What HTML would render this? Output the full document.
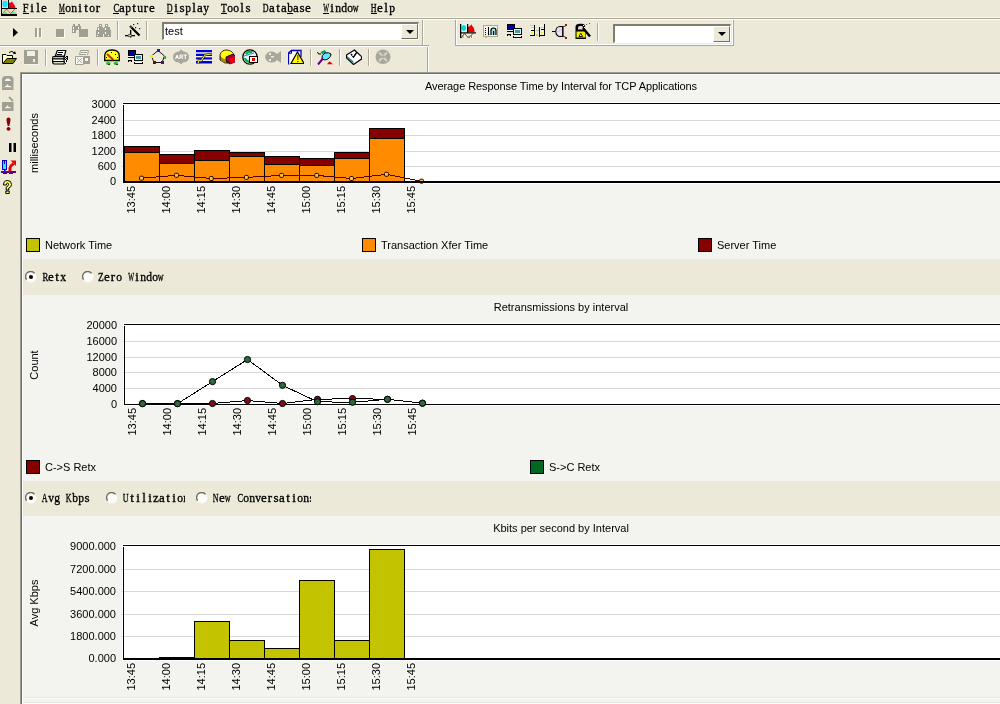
<!DOCTYPE html>
<html><head><meta charset="utf-8"><style>
*{margin:0;padding:0;box-sizing:border-box}
body{width:1000px;height:704px;background:#ece9d8;position:relative;overflow:hidden;font-family:"Liberation Sans",sans-serif}
.a{position:absolute}
.mn{position:absolute;top:2px;font-family:"Liberation Mono",monospace;font-size:12px;letter-spacing:-1.2px;color:#000;line-height:14px;white-space:nowrap;-webkit-text-stroke:0.3px #000}
.mn u{text-underline-offset:1px}
.t{position:absolute;font-size:11px;color:#000;line-height:13px;white-space:nowrap}
.rb{position:absolute;font-family:"Liberation Mono",monospace;font-size:12px;letter-spacing:-1.2px;line-height:14px;white-space:nowrap;color:#000;-webkit-text-stroke:0.3px #000}
svg{position:absolute;left:0;top:0}
.ms{position:absolute;font-family:"Liberation Serif",serif;font-size:13px;line-height:15px;white-space:nowrap;color:#000;-webkit-text-stroke:0.35px #000}
.ms i{font-style:normal;display:inline-block;width:6px;text-align:left;overflow:visible}
.ms b{display:inline-block;font-weight:normal}
</style></head><body><div style="position:absolute;left:0;top:0;width:1000px;height:704px;will-change:transform">
<div class="ms" style="left:23px;top:0px"><i><b style="transform:scaleX(0.802);margin-left:-0.62px;width:7.234375px">F</b></i><i><b style="transform:scaleX(1.0);margin-left:1.19px;width:3.625px">i</b></i><i><b style="transform:scaleX(1.0);margin-left:1.19px;width:3.625px">l</b></i><i><b style="transform:scaleX(1.0);margin-left:0.11px;width:5.78125px">e</b></i></div><div class="a" style="left:23px;top:13px;width:6px;height:1px;background:#000"></div><div class="ms" style="left:59px;top:0px"><i><b style="transform:scaleX(0.502);margin-left:-2.78px;width:11.5625px">M</b></i><i><b style="transform:scaleX(0.892);margin-left:-0.25px;width:6.5px">o</b></i><i><b style="transform:scaleX(0.892);margin-left:-0.25px;width:6.5px">n</b></i><i><b style="transform:scaleX(1.0);margin-left:1.19px;width:3.625px">i</b></i><i><b style="transform:scaleX(1.0);margin-left:1.19px;width:3.625px">t</b></i><i><b style="transform:scaleX(0.892);margin-left:-0.25px;width:6.5px">o</b></i><i><b style="transform:scaleX(1.0);margin-left:0.83px;width:4.34375px">r</b></i></div><div class="a" style="left:59px;top:13px;width:6px;height:1px;background:#000"></div><div class="ms" style="left:113px;top:0px"><i><b style="transform:scaleX(0.669);margin-left:-1.34px;width:8.671875px">C</b></i><i><b style="transform:scaleX(1.0);margin-left:0.11px;width:5.78125px">a</b></i><i><b style="transform:scaleX(0.892);margin-left:-0.25px;width:6.5px">p</b></i><i><b style="transform:scaleX(1.0);margin-left:1.19px;width:3.625px">t</b></i><i><b style="transform:scaleX(0.892);margin-left:-0.25px;width:6.5px">u</b></i><i><b style="transform:scaleX(1.0);margin-left:0.83px;width:4.34375px">r</b></i><i><b style="transform:scaleX(1.0);margin-left:0.11px;width:5.78125px">e</b></i></div><div class="a" style="left:113px;top:13px;width:6px;height:1px;background:#000"></div><div class="ms" style="left:167px;top:0px"><i><b style="transform:scaleX(0.618);margin-left:-1.70px;width:9.390625px">D</b></i><i><b style="transform:scaleX(1.0);margin-left:1.19px;width:3.625px">i</b></i><i><b style="transform:scaleX(1.0);margin-left:0.47px;width:5.0625px">s</b></i><i><b style="transform:scaleX(0.892);margin-left:-0.25px;width:6.5px">p</b></i><i><b style="transform:scaleX(1.0);margin-left:1.19px;width:3.625px">l</b></i><i><b style="transform:scaleX(1.0);margin-left:0.11px;width:5.78125px">a</b></i><i><b style="transform:scaleX(0.892);margin-left:-0.25px;width:6.5px">y</b></i></div><div class="a" style="left:167px;top:13px;width:6px;height:1px;background:#000"></div><div class="ms" style="left:221px;top:0px"><i><b style="transform:scaleX(0.729);margin-left:-0.98px;width:7.953125px">T</b></i><i><b style="transform:scaleX(0.892);margin-left:-0.25px;width:6.5px">o</b></i><i><b style="transform:scaleX(0.892);margin-left:-0.25px;width:6.5px">o</b></i><i><b style="transform:scaleX(1.0);margin-left:1.19px;width:3.625px">l</b></i><i><b style="transform:scaleX(1.0);margin-left:0.47px;width:5.0625px">s</b></i></div><div class="a" style="left:221px;top:13px;width:6px;height:1px;background:#000"></div><div class="ms" style="left:263px;top:0px"><i><b style="transform:scaleX(0.618);margin-left:-1.70px;width:9.390625px">D</b></i><i><b style="transform:scaleX(1.0);margin-left:0.11px;width:5.78125px">a</b></i><i><b style="transform:scaleX(1.0);margin-left:1.19px;width:3.625px">t</b></i><i><b style="transform:scaleX(1.0);margin-left:0.11px;width:5.78125px">a</b></i><i><b style="transform:scaleX(0.892);margin-left:-0.25px;width:6.5px">b</b></i><i><b style="transform:scaleX(1.0);margin-left:0.11px;width:5.78125px">a</b></i><i><b style="transform:scaleX(1.0);margin-left:0.47px;width:5.0625px">s</b></i><i><b style="transform:scaleX(1.0);margin-left:0.11px;width:5.78125px">e</b></i></div><div class="a" style="left:287px;top:13px;width:6px;height:1px;background:#000"></div><div class="ms" style="left:323px;top:0px"><i><b style="transform:scaleX(0.472);margin-left:-3.14px;width:12.28125px">W</b></i><i><b style="transform:scaleX(1.0);margin-left:1.19px;width:3.625px">i</b></i><i><b style="transform:scaleX(0.892);margin-left:-0.25px;width:6.5px">n</b></i><i><b style="transform:scaleX(0.892);margin-left:-0.25px;width:6.5px">d</b></i><i><b style="transform:scaleX(0.892);margin-left:-0.25px;width:6.5px">o</b></i><i><b style="transform:scaleX(0.618);margin-left:-1.70px;width:9.390625px">w</b></i></div><div class="a" style="left:323px;top:13px;width:6px;height:1px;background:#000"></div><div class="ms" style="left:371px;top:0px"><i><b style="transform:scaleX(0.618);margin-left:-1.70px;width:9.390625px">H</b></i><i><b style="transform:scaleX(1.0);margin-left:0.11px;width:5.78125px">e</b></i><i><b style="transform:scaleX(1.0);margin-left:1.19px;width:3.625px">l</b></i><i><b style="transform:scaleX(0.892);margin-left:-0.25px;width:6.5px">p</b></i></div><div class="a" style="left:371px;top:13px;width:6px;height:1px;background:#000"></div><div class="a" style="left:0;top:17px;width:1000px;height:1px;background:#f8f6ee"></div><div class="a" style="left:0;top:18px;width:1000px;height:1px;background:#aca899"></div><div class="a" style="left:0;top:19px;width:1000px;height:1px;background:#fff"></div><div class="a" style="left:0;top:45px;width:429px;height:1px;background:#aca899"></div><div class="a" style="left:0;top:46px;width:428px;height:1px;background:#fff"></div><div class="a" style="left:162px;top:22px;width:257px;height:18px;background:#fff;border-top:2px solid #7f7d70;border-left:2px solid #7f7d70;border-right:1px solid #fff;border-bottom:1px solid #fff"></div><div class="t" style="left:165px;top:25px">test</div><div class="a" style="left:401px;top:24px;width:17px;height:15px;background:#ece9d8;border-right:1px solid #716f64;border-bottom:1px solid #716f64;border-top:1px solid #fff;border-left:1px solid #fff"></div><div class="a" style="left:406px;top:30px;width:0;height:0;border-left:4px solid transparent;border-right:4px solid transparent;border-top:4px solid #000"></div><div class="a" style="left:455px;top:20px;width:279px;height:26px;border-left:1px solid #aca899;border-right:1px solid #aca899;border-bottom:1px solid #aca899"></div><div class="a" style="left:456px;top:20px;width:277px;height:25px;border-left:1px solid #fff;border-right:1px solid #fff;border-bottom:1px solid #fff"></div><div class="a" style="left:613px;top:24px;width:118px;height:19px;background:#fff;border-top:2px solid #7f7d70;border-left:2px solid #7f7d70;border-right:1px solid #fff;border-bottom:1px solid #fff"></div><div class="a" style="left:713px;top:26px;width:17px;height:16px;background:#ece9d8;border-right:1px solid #716f64;border-bottom:1px solid #716f64;border-top:1px solid #fff;border-left:1px solid #fff"></div><div class="a" style="left:718px;top:32px;width:0;height:0;border-left:4px solid transparent;border-right:4px solid transparent;border-top:4px solid #000"></div><div class="a" style="left:20px;top:72px;width:980px;height:632px;background:#f3f4ef;border-left:1px solid #9c9a8c;border-top:1px solid #9c9a8c"></div><div class="a" style="left:21px;top:73px;width:979px;height:631px;border-left:1px solid #716f64;border-top:1px solid #716f64"></div><div class="a" style="left:22px;top:74px;width:978px;height:630px;border-left:1px solid #fff;border-top:1px solid #fff"></div><div class="a" style="left:23px;top:697px;width:977px;height:1px;background:#e9e9e2"></div><div class="a" style="left:23px;top:698px;width:977px;height:1px;background:#fafaf6"></div><div class="a" style="left:23px;top:702px;width:977px;height:1px;background:#e6e6de"></div><div class="a" style="left:23px;top:703px;width:977px;height:1px;background:#fdfdfa"></div><div class="a" style="left:23px;top:259px;width:977px;height:36px;background:#ece9d8"></div><div class="a" style="left:23px;top:481px;width:977px;height:35px;background:#ece9d8"></div><svg width="1000" height="704" viewBox="0 0 1000 704"><rect x="122" y="102" width="878" height="82" fill="#fff"/><rect x="124" y="166" width="877" height="1" fill="#d8d8d8"/><rect x="121" y="166" width="2" height="1" fill="#e0e0e0"/><rect x="124" y="151" width="877" height="1" fill="#d8d8d8"/><rect x="121" y="151" width="2" height="1" fill="#e0e0e0"/><rect x="124" y="135" width="877" height="1" fill="#d8d8d8"/><rect x="121" y="135" width="2" height="1" fill="#e0e0e0"/><rect x="124" y="120" width="877" height="1" fill="#d8d8d8"/><rect x="121" y="120" width="2" height="1" fill="#e0e0e0"/><rect x="124.5" y="146.5" width="35" height="35" fill="#870000" stroke="#000" stroke-width="1"/><rect x="124.5" y="152.5" width="35" height="29" fill="#ff8c00" stroke="#000" stroke-width="1"/><rect x="159.5" y="154.5" width="35" height="27" fill="#870000" stroke="#000" stroke-width="1"/><rect x="159.5" y="163.5" width="35" height="18" fill="#ff8c00" stroke="#000" stroke-width="1"/><rect x="194.5" y="150.5" width="35" height="31" fill="#870000" stroke="#000" stroke-width="1"/><rect x="194.5" y="160.5" width="35" height="21" fill="#ff8c00" stroke="#000" stroke-width="1"/><rect x="229.5" y="152.5" width="35" height="29" fill="#870000" stroke="#000" stroke-width="1"/><rect x="229.5" y="156.5" width="35" height="25" fill="#ff8c00" stroke="#000" stroke-width="1"/><rect x="264.5" y="156.5" width="35" height="25" fill="#870000" stroke="#000" stroke-width="1"/><rect x="264.5" y="164.5" width="35" height="17" fill="#ff8c00" stroke="#000" stroke-width="1"/><rect x="299.5" y="158.5" width="35" height="23" fill="#870000" stroke="#000" stroke-width="1"/><rect x="299.5" y="165.5" width="35" height="16" fill="#ff8c00" stroke="#000" stroke-width="1"/><rect x="334.5" y="152.5" width="35" height="29" fill="#870000" stroke="#000" stroke-width="1"/><rect x="334.5" y="158.5" width="35" height="23" fill="#ff8c00" stroke="#000" stroke-width="1"/><rect x="369.5" y="128.5" width="35" height="53" fill="#870000" stroke="#000" stroke-width="1"/><rect x="369.5" y="138.5" width="35" height="43" fill="#ff8c00" stroke="#000" stroke-width="1"/><polyline points="141.5,178.2 176.5,175.3 211.3,178.5 246.4,177.4 281.6,175.4 316.7,175.4 351.5,178.5 386.5,174.3 421.5,181.2" fill="none" stroke="#500000" stroke-width="1" shape-rendering="crispEdges"/><rect x="139.5" y="176.2" width="4" height="4" rx="1.2" fill="#e8c850" stroke="#300000" stroke-width="1"/><rect x="174.5" y="173.3" width="4" height="4" rx="1.2" fill="#e8c850" stroke="#300000" stroke-width="1"/><rect x="209.3" y="176.5" width="4" height="4" rx="1.2" fill="#e8c850" stroke="#300000" stroke-width="1"/><rect x="244.4" y="175.4" width="4" height="4" rx="1.2" fill="#e8c850" stroke="#300000" stroke-width="1"/><rect x="279.6" y="173.4" width="4" height="4" rx="1.2" fill="#e8c850" stroke="#300000" stroke-width="1"/><rect x="314.7" y="173.4" width="4" height="4" rx="1.2" fill="#e8c850" stroke="#300000" stroke-width="1"/><rect x="349.5" y="176.5" width="4" height="4" rx="1.2" fill="#e8c850" stroke="#300000" stroke-width="1"/><rect x="384.5" y="172.3" width="4" height="4" rx="1.2" fill="#e8c850" stroke="#300000" stroke-width="1"/><rect x="419.5" y="179.2" width="4" height="4" rx="1.2" fill="#e8c850" stroke="#300000" stroke-width="1"/><rect x="123" y="103" width="877" height="1" fill="#000"/><rect x="123" y="105" width="1" height="76" fill="#000"/><rect x="123" y="181" width="877" height="2" fill="#000"/><text x="116" y="185.0" text-anchor="end" font-size="11" font-family="Liberation Sans">0</text><text x="116" y="169.5" text-anchor="end" font-size="11" font-family="Liberation Sans">600</text><text x="116" y="154.5" text-anchor="end" font-size="11" font-family="Liberation Sans">1200</text><text x="116" y="138.5" text-anchor="end" font-size="11" font-family="Liberation Sans">1800</text><text x="116" y="123.5" text-anchor="end" font-size="11" font-family="Liberation Sans">2400</text><text x="116" y="108.0" text-anchor="end" font-size="11" font-family="Liberation Sans">3000</text><text transform="translate(135,186) rotate(-90)" text-anchor="end" font-size="11" font-family="Liberation Sans">13:45</text><text transform="translate(170,186) rotate(-90)" text-anchor="end" font-size="11" font-family="Liberation Sans">14:00</text><text transform="translate(205,186) rotate(-90)" text-anchor="end" font-size="11" font-family="Liberation Sans">14:15</text><text transform="translate(240,186) rotate(-90)" text-anchor="end" font-size="11" font-family="Liberation Sans">14:30</text><text transform="translate(275,186) rotate(-90)" text-anchor="end" font-size="11" font-family="Liberation Sans">14:45</text><text transform="translate(310,186) rotate(-90)" text-anchor="end" font-size="11" font-family="Liberation Sans">15:00</text><text transform="translate(345,186) rotate(-90)" text-anchor="end" font-size="11" font-family="Liberation Sans">15:15</text><text transform="translate(380,186) rotate(-90)" text-anchor="end" font-size="11" font-family="Liberation Sans">15:30</text><text transform="translate(415,186) rotate(-90)" text-anchor="end" font-size="11" font-family="Liberation Sans">15:45</text><text transform="translate(38,143) rotate(-90)" text-anchor="middle" font-size="11" font-family="Liberation Sans">milliseconds</text><text x="561" y="90" text-anchor="middle" font-size="11" letter-spacing="-0.08" font-family="Liberation Sans">Average Response Time by Interval for TCP Applications</text><rect x="26.5" y="238.5" width="13" height="13" fill="#c3c300" stroke="#000"/><text x="45" y="249" font-size="11" font-family="Liberation Sans">Network Time</text><rect x="362.5" y="238.5" width="13" height="13" fill="#ff8c00" stroke="#000"/><text x="381" y="249" font-size="11" font-family="Liberation Sans">Transaction Xfer Time</text><rect x="698.5" y="238.5" width="13" height="13" fill="#870000" stroke="#000"/><text x="717" y="249" font-size="11" font-family="Liberation Sans">Server Time</text><rect x="123" y="323" width="877" height="83" fill="#fff"/><rect x="125" y="388" width="876" height="1" fill="#d8d8d8"/><rect x="122" y="388" width="2" height="1" fill="#e0e0e0"/><rect x="125" y="372" width="876" height="1" fill="#d8d8d8"/><rect x="122" y="372" width="2" height="1" fill="#e0e0e0"/><rect x="125" y="357" width="876" height="1" fill="#d8d8d8"/><rect x="122" y="357" width="2" height="1" fill="#e0e0e0"/><rect x="125" y="341" width="876" height="1" fill="#d8d8d8"/><rect x="122" y="341" width="2" height="1" fill="#e0e0e0"/><polyline points="142.5,403.5 177.5,403.5 212.5,403.5 247.5,400.5 282.5,403.5 317.5,399.3 352.5,398.6 387.5,399.3 422.5,403.2" fill="none" stroke="#000" stroke-width="1" shape-rendering="crispEdges"/><polyline points="142.5,403.7 177.5,403.7 212.5,381.6 247.5,359.5 282.5,385.3 317.5,401.8 352.5,402.3 387.5,399.3 422.5,403.2" fill="none" stroke="#000" stroke-width="1" shape-rendering="crispEdges"/><rect x="124" y="324" width="876" height="1" fill="#000"/><rect x="124" y="326" width="1" height="78" fill="#000"/><rect x="124" y="404" width="876" height="1" fill="#000"/><circle cx="142.5" cy="403.5" r="3.1" fill="#820c14" stroke="#000" stroke-width="1"/><circle cx="177.5" cy="403.5" r="3.1" fill="#820c14" stroke="#000" stroke-width="1"/><circle cx="212.5" cy="403.5" r="3.1" fill="#820c14" stroke="#000" stroke-width="1"/><circle cx="247.5" cy="400.5" r="3.1" fill="#820c14" stroke="#000" stroke-width="1"/><circle cx="282.5" cy="403.5" r="3.1" fill="#820c14" stroke="#000" stroke-width="1"/><circle cx="317.5" cy="399.3" r="3.1" fill="#820c14" stroke="#000" stroke-width="1"/><circle cx="352.5" cy="398.6" r="3.1" fill="#820c14" stroke="#000" stroke-width="1"/><circle cx="387.5" cy="399.3" r="3.1" fill="#820c14" stroke="#000" stroke-width="1"/><circle cx="422.5" cy="403.2" r="3.1" fill="#820c14" stroke="#000" stroke-width="1"/><circle cx="142.5" cy="403.7" r="3.1" fill="#2e6a3c" stroke="#000" stroke-width="1"/><circle cx="177.5" cy="403.7" r="3.1" fill="#2e6a3c" stroke="#000" stroke-width="1"/><circle cx="212.5" cy="381.6" r="3.1" fill="#2e6a3c" stroke="#000" stroke-width="1"/><circle cx="247.5" cy="359.5" r="3.1" fill="#2e6a3c" stroke="#000" stroke-width="1"/><circle cx="282.5" cy="385.3" r="3.1" fill="#2e6a3c" stroke="#000" stroke-width="1"/><circle cx="317.5" cy="401.8" r="3.1" fill="#2e6a3c" stroke="#000" stroke-width="1"/><circle cx="352.5" cy="402.3" r="3.1" fill="#2e6a3c" stroke="#000" stroke-width="1"/><circle cx="387.5" cy="399.3" r="3.1" fill="#2e6a3c" stroke="#000" stroke-width="1"/><circle cx="422.5" cy="403.2" r="3.1" fill="#2e6a3c" stroke="#000" stroke-width="1"/><text x="117" y="407.5" text-anchor="end" font-size="11" font-family="Liberation Sans">0</text><text x="117" y="391.5" text-anchor="end" font-size="11" font-family="Liberation Sans">4000</text><text x="117" y="375.5" text-anchor="end" font-size="11" font-family="Liberation Sans">8000</text><text x="117" y="360.5" text-anchor="end" font-size="11" font-family="Liberation Sans">12000</text><text x="117" y="344.5" text-anchor="end" font-size="11" font-family="Liberation Sans">16000</text><text x="117" y="328.5" text-anchor="end" font-size="11" font-family="Liberation Sans">20000</text><text transform="translate(136,408) rotate(-90)" text-anchor="end" font-size="11" font-family="Liberation Sans">13:45</text><text transform="translate(171,408) rotate(-90)" text-anchor="end" font-size="11" font-family="Liberation Sans">14:00</text><text transform="translate(206,408) rotate(-90)" text-anchor="end" font-size="11" font-family="Liberation Sans">14:15</text><text transform="translate(241,408) rotate(-90)" text-anchor="end" font-size="11" font-family="Liberation Sans">14:30</text><text transform="translate(276,408) rotate(-90)" text-anchor="end" font-size="11" font-family="Liberation Sans">14:45</text><text transform="translate(311,408) rotate(-90)" text-anchor="end" font-size="11" font-family="Liberation Sans">15:00</text><text transform="translate(346,408) rotate(-90)" text-anchor="end" font-size="11" font-family="Liberation Sans">15:15</text><text transform="translate(381,408) rotate(-90)" text-anchor="end" font-size="11" font-family="Liberation Sans">15:30</text><text transform="translate(416,408) rotate(-90)" text-anchor="end" font-size="11" font-family="Liberation Sans">15:45</text><text transform="translate(38,365) rotate(-90)" text-anchor="middle" font-size="11" font-family="Liberation Sans">Count</text><text x="561" y="311" text-anchor="middle" font-size="11" font-family="Liberation Sans">Retransmissions by interval</text><rect x="26.5" y="460.5" width="13" height="13" fill="#870000" stroke="#000"/><text x="45" y="471" font-size="11" font-family="Liberation Sans">C-&gt;S Retx</text><rect x="530.5" y="460.5" width="13" height="13" fill="#006820" stroke="#000"/><text x="549" y="471" font-size="11" font-family="Liberation Sans">S-&gt;C Retx</text><rect x="122" y="544" width="878" height="117" fill="#fff"/><rect x="124" y="636" width="877" height="1" fill="#d8d8d8"/><rect x="121" y="636" width="2" height="1" fill="#e0e0e0"/><rect x="124" y="614" width="877" height="1" fill="#d8d8d8"/><rect x="121" y="614" width="2" height="1" fill="#e0e0e0"/><rect x="124" y="591" width="877" height="1" fill="#d8d8d8"/><rect x="121" y="591" width="2" height="1" fill="#e0e0e0"/><rect x="124" y="569" width="877" height="1" fill="#d8d8d8"/><rect x="121" y="569" width="2" height="1" fill="#e0e0e0"/><rect x="159.5" y="657.5" width="35" height="1" fill="#c3c300" stroke="#000"/><rect x="194.5" y="621.5" width="35" height="37" fill="#c3c300" stroke="#000"/><rect x="229.5" y="640.5" width="35" height="18" fill="#c3c300" stroke="#000"/><rect x="264.5" y="648.5" width="35" height="10" fill="#c3c300" stroke="#000"/><rect x="299.5" y="580.5" width="35" height="78" fill="#c3c300" stroke="#000"/><rect x="334.5" y="640.5" width="35" height="18" fill="#c3c300" stroke="#000"/><rect x="369.5" y="549.5" width="35" height="109" fill="#c3c300" stroke="#000"/><rect x="123" y="545" width="877" height="1" fill="#000"/><rect x="123" y="547" width="1" height="111" fill="#000"/><rect x="123" y="658" width="877" height="2" fill="#000"/><text x="116" y="662.0" text-anchor="end" font-size="11" font-family="Liberation Sans">0.000</text><text x="116" y="639.5" text-anchor="end" font-size="11" font-family="Liberation Sans">1800.000</text><text x="116" y="617.5" text-anchor="end" font-size="11" font-family="Liberation Sans">3600.000</text><text x="116" y="594.5" text-anchor="end" font-size="11" font-family="Liberation Sans">5400.000</text><text x="116" y="572.5" text-anchor="end" font-size="11" font-family="Liberation Sans">7200.000</text><text x="116" y="549.5" text-anchor="end" font-size="11" font-family="Liberation Sans">9000.000</text><text transform="translate(135,663) rotate(-90)" text-anchor="end" font-size="11" font-family="Liberation Sans">13:45</text><text transform="translate(170,663) rotate(-90)" text-anchor="end" font-size="11" font-family="Liberation Sans">14:00</text><text transform="translate(205,663) rotate(-90)" text-anchor="end" font-size="11" font-family="Liberation Sans">14:15</text><text transform="translate(240,663) rotate(-90)" text-anchor="end" font-size="11" font-family="Liberation Sans">14:30</text><text transform="translate(275,663) rotate(-90)" text-anchor="end" font-size="11" font-family="Liberation Sans">14:45</text><text transform="translate(310,663) rotate(-90)" text-anchor="end" font-size="11" font-family="Liberation Sans">15:00</text><text transform="translate(345,663) rotate(-90)" text-anchor="end" font-size="11" font-family="Liberation Sans">15:15</text><text transform="translate(380,663) rotate(-90)" text-anchor="end" font-size="11" font-family="Liberation Sans">15:30</text><text transform="translate(415,663) rotate(-90)" text-anchor="end" font-size="11" font-family="Liberation Sans">15:45</text><text transform="translate(38,603) rotate(-90)" text-anchor="middle" font-size="11" font-family="Liberation Sans">Avg Kbps</text><text x="561" y="532" text-anchor="middle" font-size="11" font-family="Liberation Sans">Kbits per second by Interval</text></svg><svg style="left:25px;top:271px" width="12" height="12"><circle cx="6" cy="6" r="5.5" fill="#fbfbf8"/><path d="M1.6 8.6 A5 5 0 0 1 9.6 2.4" fill="none" stroke="#6c6c64" stroke-width="1.4"/><circle cx="6" cy="6" r="2" fill="#000"/></svg><div class="ms" style="left:42px;top:269px"><i><b style="transform:scaleX(0.669);margin-left:-1.34px;width:8.671875px">R</b></i><i><b style="transform:scaleX(1.0);margin-left:0.11px;width:5.78125px">e</b></i><i><b style="transform:scaleX(1.0);margin-left:1.19px;width:3.625px">t</b></i><i><b style="transform:scaleX(0.892);margin-left:-0.25px;width:6.5px">x</b></i></div><svg style="left:82px;top:271px" width="12" height="12"><circle cx="6" cy="6" r="5.5" fill="#fbfbf8"/><path d="M1.6 8.6 A5 5 0 0 1 9.6 2.4" fill="none" stroke="#6c6c64" stroke-width="1.4"/></svg><div class="ms" style="left:98px;top:269px"><i><b style="transform:scaleX(0.729);margin-left:-0.98px;width:7.953125px">Z</b></i><i><b style="transform:scaleX(1.0);margin-left:0.11px;width:5.78125px">e</b></i><i><b style="transform:scaleX(1.0);margin-left:0.83px;width:4.34375px">r</b></i><i><b style="transform:scaleX(0.892);margin-left:-0.25px;width:6.5px">o</b></i><i><b style="transform:scaleX(0.892);margin-left:-0.25px;width:6.5px">&nbsp;</b></i><i><b style="transform:scaleX(0.472);margin-left:-3.14px;width:12.28125px">W</b></i><i><b style="transform:scaleX(1.0);margin-left:1.19px;width:3.625px">i</b></i><i><b style="transform:scaleX(0.892);margin-left:-0.25px;width:6.5px">n</b></i><i><b style="transform:scaleX(0.892);margin-left:-0.25px;width:6.5px">d</b></i><i><b style="transform:scaleX(0.892);margin-left:-0.25px;width:6.5px">o</b></i><i><b style="transform:scaleX(0.618);margin-left:-1.70px;width:9.390625px">w</b></i></div><svg style="left:25px;top:492px" width="12" height="12"><circle cx="6" cy="6" r="5.5" fill="#fbfbf8"/><path d="M1.6 8.6 A5 5 0 0 1 9.6 2.4" fill="none" stroke="#6c6c64" stroke-width="1.4"/><circle cx="6" cy="6" r="2" fill="#000"/></svg><div class="ms" style="left:42px;top:490px"><i><b style="transform:scaleX(0.618);margin-left:-1.70px;width:9.390625px">A</b></i><i><b style="transform:scaleX(0.892);margin-left:-0.25px;width:6.5px">v</b></i><i><b style="transform:scaleX(0.892);margin-left:-0.25px;width:6.5px">g</b></i><i><b style="transform:scaleX(0.892);margin-left:-0.25px;width:6.5px">&nbsp;</b></i><i><b style="transform:scaleX(0.618);margin-left:-1.70px;width:9.390625px">K</b></i><i><b style="transform:scaleX(0.892);margin-left:-0.25px;width:6.5px">b</b></i><i><b style="transform:scaleX(0.892);margin-left:-0.25px;width:6.5px">p</b></i><i><b style="transform:scaleX(1.0);margin-left:0.47px;width:5.0625px">s</b></i></div><svg style="left:106px;top:492px" width="12" height="12"><circle cx="6" cy="6" r="5.5" fill="#fbfbf8"/><path d="M1.6 8.6 A5 5 0 0 1 9.6 2.4" fill="none" stroke="#6c6c64" stroke-width="1.4"/></svg><div class="ms" style="left:123px;top:490px;width:62px;overflow:hidden"><i><b style="transform:scaleX(0.618);margin-left:-1.70px;width:9.390625px">U</b></i><i><b style="transform:scaleX(1.0);margin-left:1.19px;width:3.625px">t</b></i><i><b style="transform:scaleX(1.0);margin-left:1.19px;width:3.625px">i</b></i><i><b style="transform:scaleX(1.0);margin-left:1.19px;width:3.625px">l</b></i><i><b style="transform:scaleX(1.0);margin-left:1.19px;width:3.625px">i</b></i><i><b style="transform:scaleX(1.0);margin-left:0.11px;width:5.78125px">z</b></i><i><b style="transform:scaleX(1.0);margin-left:0.11px;width:5.78125px">a</b></i><i><b style="transform:scaleX(1.0);margin-left:1.19px;width:3.625px">t</b></i><i><b style="transform:scaleX(1.0);margin-left:1.19px;width:3.625px">i</b></i><i><b style="transform:scaleX(0.892);margin-left:-0.25px;width:6.5px">o</b></i><i><b style="transform:scaleX(0.892);margin-left:-0.25px;width:6.5px">n</b></i></div><svg style="left:196px;top:492px" width="12" height="12"><circle cx="6" cy="6" r="5.5" fill="#fbfbf8"/><path d="M1.6 8.6 A5 5 0 0 1 9.6 2.4" fill="none" stroke="#6c6c64" stroke-width="1.4"/></svg><div class="ms" style="left:213px;top:490px;width:98px;overflow:hidden"><i><b style="transform:scaleX(0.618);margin-left:-1.70px;width:9.390625px">N</b></i><i><b style="transform:scaleX(1.0);margin-left:0.11px;width:5.78125px">e</b></i><i><b style="transform:scaleX(0.618);margin-left:-1.70px;width:9.390625px">w</b></i><i><b style="transform:scaleX(0.892);margin-left:-0.25px;width:6.5px">&nbsp;</b></i><i><b style="transform:scaleX(0.669);margin-left:-1.34px;width:8.671875px">C</b></i><i><b style="transform:scaleX(0.892);margin-left:-0.25px;width:6.5px">o</b></i><i><b style="transform:scaleX(0.892);margin-left:-0.25px;width:6.5px">n</b></i><i><b style="transform:scaleX(0.892);margin-left:-0.25px;width:6.5px">v</b></i><i><b style="transform:scaleX(1.0);margin-left:0.11px;width:5.78125px">e</b></i><i><b style="transform:scaleX(1.0);margin-left:0.83px;width:4.34375px">r</b></i><i><b style="transform:scaleX(1.0);margin-left:0.47px;width:5.0625px">s</b></i><i><b style="transform:scaleX(1.0);margin-left:0.11px;width:5.78125px">a</b></i><i><b style="transform:scaleX(1.0);margin-left:1.19px;width:3.625px">t</b></i><i><b style="transform:scaleX(1.0);margin-left:1.19px;width:3.625px">i</b></i><i><b style="transform:scaleX(0.892);margin-left:-0.25px;width:6.5px">o</b></i><i><b style="transform:scaleX(0.892);margin-left:-0.25px;width:6.5px">n</b></i><i><b style="transform:scaleX(1.0);margin-left:0.47px;width:5.0625px">s</b></i></div><svg style="left:0;top:0" width="18" height="17" viewBox="0 0 18 17"><rect x="2" y="0" width="15" height="15" fill="#f0d8d8"/><rect x="9" y="0" width="8" height="8" fill="#d8ecd8"/><ellipse cx="5" cy="4" rx="2.6" ry="3.3" fill="#10e8f8"/><path d="M9 8 V3 Q11 2.5 12 1.5 L13 3 Q15 5 15.5 8 Z" fill="#f00010"/><rect x="2" y="9" width="15" height="5" fill="#f0d8c0"/><rect x="3" y="12" width="4" height="2" fill="#80e080"/><rect x="11.5" y="12" width="4" height="2" fill="#80e080"/><path d="M2.5 13.5 L6.5 9 L10.5 13.5 L15 9" fill="none" stroke="#803020" stroke-width="1" stroke-dasharray="1 0.6"/><rect x="1" y="0" width="1" height="16" fill="#000"/><rect x="8" y="0" width="1" height="9" fill="#000"/><rect x="1" y="8" width="16" height="1" fill="#000"/><rect x="1" y="14" width="16" height="2" fill="#000"/></svg><svg style="left:8px;top:22px" width="16" height="16" viewBox="0 0 16 16"><path d="M5 6 L10 10.5 L5 15 Z" fill="#000" stroke="none" stroke-width="1"/></svg><svg style="left:30px;top:22px" width="16" height="16" viewBox="0 0 16 16"><rect x="5" y="6" width="2" height="9" fill="#a09f94"/><rect x="9" y="6" width="2" height="9" fill="#a09f94"/><rect x="7" y="7" width="1" height="9" fill="#ffffff"/><rect x="11" y="7" width="1" height="9" fill="#ffffff"/></svg><svg style="left:52px;top:22px" width="16" height="16" viewBox="0 0 16 16"><rect x="4" y="7" width="8" height="8" fill="#a09f94"/><rect x="5" y="15" width="8" height="1" fill="#ffffff"/><rect x="12" y="8" width="1" height="8" fill="#ffffff"/></svg><svg style="left:72px;top:23px" width="16" height="16" viewBox="0 0 16 16"><rect x="1" y="1" width="2" height="2" fill="#a09f94"/><rect x="6" y="1" width="2" height="2" fill="#a09f94"/><rect x="0" y="3" width="4" height="7" fill="#a09f94"/><rect x="4" y="3" width="5" height="4" fill="#a09f94"/><rect x="1" y="4" width="1" height="2" fill="#ffffff"/><rect x="6" y="4" width="1" height="2" fill="#ffffff"/><rect x="1" y="7" width="1" height="2" fill="#ffffff"/><rect x="7" y="6" width="9" height="8" fill="#a09f94"/><rect x="8" y="14" width="8" height="1" fill="#f8f8f0"/><rect x="16" y="7" width="0" height="0" fill="#ffffff"/></svg><svg style="left:96px;top:23px" width="16" height="16" viewBox="0 0 16 16"><rect x="3" y="1" width="3" height="3" fill="#a09f94"/><rect x="9" y="1" width="3" height="3" fill="#a09f94"/><rect x="1" y="4" width="6" height="3" fill="#a09f94"/><rect x="8" y="4" width="6" height="3" fill="#a09f94"/><rect x="0" y="7" width="7" height="7" fill="#a09f94"/><rect x="8" y="7" width="7" height="7" fill="#a09f94"/><rect x="6" y="5" width="3" height="6" fill="#a09f94"/><rect x="4" y="2" width="1" height="1" fill="#ffffff"/><rect x="10" y="2" width="1" height="1" fill="#ffffff"/><rect x="2" y="5" width="1" height="2" fill="#ffffff"/><rect x="9" y="5" width="1" height="2" fill="#ffffff"/><rect x="2" y="9" width="1" height="2" fill="#ffffff"/><rect x="9" y="9" width="1" height="2" fill="#ffffff"/><rect x="1" y="12" width="1" height="1" fill="#ffffff"/><rect x="12" y="12" width="1" height="1" fill="#ffffff"/></svg><div class="a" style="left:117px;top:21px;width:1px;height:19px;background:#aca899"></div><div class="a" style="left:118px;top:21px;width:1px;height:19px;background:#fff"></div><svg style="left:125px;top:22px" width="16" height="16" viewBox="0 0 16 16"><path d="M5 4 L14.5 13.5" fill="none" stroke="#000" stroke-width="2.3"/><rect x="4" y="3" width="1" height="1" fill="#ffffff"/><rect x="5.5" y="4.5" width="1" height="1" fill="#ffffff"/><rect x="8" y="2" width="1.2" height="1.2" fill="#222"/><rect x="12" y="1" width="1.2" height="1.2" fill="#222"/><rect x="10" y="5" width="1.2" height="1.2" fill="#222"/><rect x="14" y="6" width="1.2" height="1.2" fill="#222"/><rect x="0" y="13" width="10" height="1.3" fill="#000"/><rect x="5" y="8" width="1.3" height="7.5" fill="#000"/><path d="M3 13.5 a1.8 1.2 0 1 0 3.6 0 a1.8 1.2 0 1 0 -3.6 0Z" fill="#d8d8a0" stroke="#000" stroke-width="0.6"/></svg><div class="a" style="left:146px;top:21px;width:1px;height:19px;background:#aca899"></div><div class="a" style="left:147px;top:21px;width:1px;height:19px;background:#fff"></div><svg style="left:460px;top:23px" width="16" height="16" viewBox="0 0 16 16"><rect x="1" y="1" width="6" height="8.5" fill="#d0f8f8"/><path d="M3.8 2 a2.2 3 0 1 0 0.01 0Z" fill="#00d8d8" stroke="none" stroke-width="1"/><path d="M8 9.3 V4 L10 3 L11.5 1.2 L12.2 3 Q14.5 4.5 14.5 9.3Z" fill="#f00000" stroke="none" stroke-width="1"/><rect x="1" y="10.5" width="12" height="4.5" fill="#f8f0e8"/><rect x="2.5" y="12.5" width="1" height="2.5" fill="#40c040"/><rect x="8.5" y="12.5" width="1" height="2.5" fill="#40c040"/><rect x="11" y="12.5" width="1" height="2.5" fill="#40c040"/><path d="M1 15 L4.5 10.5 L8.5 15 L13 10.5" fill="none" stroke="#604020" stroke-width="1"/><rect x="0" y="1" width="1.3" height="14" fill="#000"/><rect x="7" y="1" width="1.3" height="9" fill="#000"/><rect x="0" y="9.3" width="16" height="1.2" fill="#000"/></svg><svg style="left:483px;top:23px" width="16" height="16" viewBox="0 0 16 16"><rect x="0" y="2" width="15" height="12" fill="#a8a89c"/><rect x="1" y="3" width="13" height="10" fill="#f4f4ec"/><rect x="2" y="5" width="1" height="1" fill="#000"/><rect x="2" y="7" width="1" height="1" fill="#000"/><rect x="2" y="9" width="1" height="1" fill="#000"/><rect x="2" y="11" width="1" height="1" fill="#000"/><rect x="5" y="4" width="1" height="9" fill="#000"/><path d="M8 12 V7.5 Q8 5 10.5 5 Q13 5 13 7.5 V12" fill="#a0e0e0" stroke="#000" stroke-width="1.2"/><rect x="10" y="8" width="1.2" height="4" fill="#000"/><path d="M1 13 L3 15 L7 11" fill="none" stroke="#c0c060" stroke-width="1"/></svg><svg style="left:506px;top:23px" width="16" height="16" viewBox="0 0 16 16"><rect x="1" y="1" width="8" height="6" fill="#000"/><rect x="2" y="2" width="6" height="4" fill="#0000a0"/><rect x="1" y="7" width="8" height="1" fill="#fff"/><rect x="1" y="8" width="8" height="1" fill="#000"/><rect x="7" y="5" width="9" height="7" fill="#000"/><rect x="8" y="6" width="7" height="5" fill="#e8f0f0"/><rect x="9" y="7" width="5" height="3" fill="#40a0a0"/><rect x="7" y="13" width="9" height="2" fill="#000"/><rect x="8" y="13" width="7" height="1" fill="#fff"/><rect x="1" y="11" width="4" height="2" fill="#000"/><rect x="2" y="12" width="2" height="1" fill="#e0d040"/></svg><svg style="left:529px;top:23px" width="16" height="16" viewBox="0 0 16 16"><rect x="1" y="2" width="5" height="11" fill="#f0f0e4"/><rect x="1" y="2" width="5" height="1" fill="#c8c8b8"/><rect x="5" y="2" width="1" height="11" fill="#000"/><rect x="1" y="12" width="5" height="1" fill="#000"/><rect x="6" y="4" width="5" height="10" fill="#e8e8d8"/><rect x="10" y="4" width="1" height="10" fill="#000"/><rect x="11" y="1" width="5" height="12" fill="#f0f0e4"/><rect x="15" y="1" width="1" height="12" fill="#000"/><rect x="11" y="12" width="5" height="1" fill="#000"/><rect x="2" y="4" width="3" height="1" fill="#c8c8b8"/><rect x="12" y="4" width="3" height="1" fill="#c8c8b8"/><rect x="2" y="9" width="2" height="2" fill="#f0f040"/><rect x="7" y="11" width="2" height="2" fill="#d0d040"/><rect x="12" y="9" width="2" height="2" fill="#f0f040"/><rect x="2" y="7" width="3" height="1" fill="#000"/><rect x="12" y="6" width="3" height="1" fill="#000"/><rect x="7" y="7" width="3" height="1" fill="#c0c0b0"/></svg><svg style="left:552px;top:23px" width="16" height="16" viewBox="0 0 16 16"><rect x="0" y="8" width="4" height="1" fill="#000"/><path d="M10.5 3.5 H8 A4.2 5 0 0 0 8 13.5 H10.5 Z" fill="#e4e4f4" stroke="#000" stroke-width="1.1"/><rect x="10.3" y="3" width="1.3" height="11" fill="#301010"/><path d="M11 4 L14 2.5 M11 13 L14 14.5" fill="none" stroke="#602020" stroke-width="1"/><rect x="13" y="1" width="2" height="2" fill="#802020"/><rect x="13" y="14" width="2" height="2" fill="#802020"/><path d="M8 4 L8 8 L4 9" fill="none" stroke="#c0c0d8" stroke-width="0.7"/></svg><svg style="left:575px;top:23px" width="16" height="16" viewBox="0 0 16 16"><path d="M0.5 8 V4 Q0.5 0.8 5 0.8 H7 Q10 0.8 10 4 V8Z" fill="#000" stroke="none" stroke-width="1"/><path d="M3 6.5 V4.5 Q3 3 5 3 H6.5 Q8 3 8 4.5 V6.5Z" fill="#f0d0e0" stroke="none" stroke-width="1"/><rect x="0.5" y="8" width="10.5" height="8" fill="#000"/><rect x="1.5" y="8.5" width="9" height="6" fill="#f0f000"/><path d="M4 13.5 L5.8 10.3 L7.6 13.5Z" fill="#fff" stroke="#000" stroke-width="0.9"/><path d="M8 5 L15 13.5" fill="none" stroke="#000" stroke-width="2.4"/><rect x="8" y="2" width="1" height="1" fill="#fff"/><rect x="9" y="4" width="1" height="1" fill="#fff"/><rect x="11" y="1" width="1" height="1" fill="#555"/><rect x="14" y="0" width="1" height="1" fill="#555"/></svg><div class="a" style="left:597px;top:23px;width:1px;height:18px;background:#aca899"></div><div class="a" style="left:598px;top:23px;width:1px;height:18px;background:#fff"></div><svg style="left:1px;top:49px" width="16" height="16" viewBox="0 0 16 16"><path d="M1.5 14.5 V5.5 H5 L6 6.5 H11.5 V9" fill="#ffffc0" stroke="#000" stroke-width="1"/><path d="M2 14.5 L6 9.5 H15.5 L12 14.5 Z" fill="#808000" stroke="#000" stroke-width="1"/><path d="M8 3.5 Q11 1 13.5 4" fill="none" stroke="#000" stroke-width="1"/><path d="M12 5 L15 5 L14 2 Z" fill="#000" stroke="none" stroke-width="1"/></svg><svg style="left:24px;top:49px" width="16" height="16" viewBox="0 0 16 16"><rect x="0" y="1" width="14" height="14" fill="#a09f94"/><rect x="3" y="2" width="8" height="5" fill="#f0efe8"/><rect x="9" y="10" width="2" height="3" fill="#f0efe8"/><rect x="1" y="15" width="14" height="1" fill="#f8f8f0"/></svg><div class="a" style="left:45px;top:49px;width:1px;height:17px;background:#aca899"></div><div class="a" style="left:46px;top:49px;width:1px;height:17px;background:#fff"></div><svg style="left:52px;top:49px" width="16" height="16" viewBox="0 0 16 16"><path d="M5.3 1.5 H13.8 L12.5 7 H3.3 Z" fill="#fff" stroke="#000" stroke-width="1.2"/><rect x="6" y="3" width="5" height="1" fill="#000"/><rect x="5" y="5" width="5" height="1" fill="#000"/><path d="M1.5 7.6 H12 V14.8 H2 Q0.6 14.8 0.6 13 V9.4 Q0.6 7.6 1.5 7.6Z" fill="#fff" stroke="#000" stroke-width="1.2"/><rect x="1" y="9.2" width="11.5" height="1.3" fill="#000"/><rect x="1" y="12" width="11.5" height="1.3" fill="#000"/><rect x="2" y="13.3" width="9.5" height="1" fill="#f0f0c8"/><rect x="12" y="7" width="1" height="1" fill="#000"/><rect x="14" y="7" width="1" height="1" fill="#000"/><rect x="13" y="8" width="1" height="1" fill="#000"/><rect x="12" y="9" width="1" height="1" fill="#000"/><rect x="14" y="9" width="1" height="1" fill="#000"/><rect x="13" y="10" width="1" height="1" fill="#000"/><rect x="12" y="13" width="1" height="1" fill="#000"/><rect x="13" y="14" width="1" height="1" fill="#000"/><rect x="15" y="7" width="1" height="4" fill="#000"/><rect x="14" y="11" width="1" height="2" fill="#000"/></svg><svg style="left:75px;top:49px" width="16" height="16" viewBox="0 0 16 16"><path d="M4.5 6 L5.5 1.5 H13.5 L12.5 6" fill="#f4f4ee" stroke="#a09f94" stroke-width="1"/><rect x="6" y="3" width="6" height="1" fill="#a09f94"/><rect x="5" y="5" width="6" height="1" fill="#a09f94"/><path d="M0.5 7.5 H8.5 V15.5 H0.5 Z" fill="#f4f4ee" stroke="#a09f94" stroke-width="1"/><path d="M2 9 L7 14 M7 9 L2 14" fill="none" stroke="#a09f94" stroke-width="0.8"/><rect x="9" y="7" width="6" height="8" fill="#a09f94"/><rect x="10" y="9" width="3" height="3" fill="#f4f4ee"/></svg><div class="a" style="left:97px;top:49px;width:1px;height:17px;background:#aca899"></div><div class="a" style="left:98px;top:49px;width:1px;height:17px;background:#fff"></div><svg style="left:104px;top:49px" width="16" height="16" viewBox="0 0 16 16"><path d="M0.7 11.5 V7 Q0.7 1 8 1 Q15.3 1 15.3 7 V11.5 Z" fill="#ffff20" stroke="#000" stroke-width="1.3"/><path d="M3 5 L9.5 11" fill="none" stroke="#b83000" stroke-width="1.8"/><rect x="7" y="3" width="1" height="1" fill="#000"/><rect x="11" y="5" width="1" height="1" fill="#000"/><rect x="2" y="8" width="1" height="1" fill="#000"/><rect x="13" y="8" width="1" height="1" fill="#000"/><path d="M2 14.5 a2.3 1.4 0 1 0 4.6 0 a2.3 1.4 0 1 0 -4.6 0Z" fill="#20c020" stroke="none" stroke-width="1"/><path d="M9.5 14.5 a2.3 1.4 0 1 0 4.6 0 a2.3 1.4 0 1 0 -4.6 0Z" fill="#20c020" stroke="none" stroke-width="1"/><rect x="4" y="15" width="2" height="1" fill="#005000"/><rect x="12" y="15" width="2" height="1" fill="#005000"/></svg><svg style="left:127px;top:49px" width="16" height="16" viewBox="0 0 16 16"><rect x="1" y="1" width="8" height="6" fill="#000"/><rect x="2" y="2" width="6" height="4" fill="#0000a0"/><rect x="1" y="7" width="8" height="1" fill="#fff"/><rect x="1" y="8" width="8" height="1" fill="#000"/><rect x="7" y="5" width="9" height="7" fill="#000"/><rect x="8" y="6" width="7" height="5" fill="#e8f0f0"/><rect x="9" y="7" width="5" height="3" fill="#40a0a0"/><rect x="7" y="13" width="9" height="2" fill="#000"/><rect x="8" y="13" width="7" height="1" fill="#fff"/><rect x="1" y="11" width="4" height="2" fill="#000"/><rect x="2" y="12" width="2" height="1" fill="#e0d040"/></svg><svg style="left:150px;top:49px" width="16" height="16" viewBox="0 0 16 16"><path d="M8 1.5 L14.5 7 L12 13.5 L4 13.5 L1.5 7 Z" fill="none" stroke="#000" stroke-width="0.9"/><rect x="7" y="0" width="3" height="3" fill="#2020a0"/><rect x="14" y="7" width="2" height="3" fill="#40a040"/><rect x="11" y="12" width="3" height="3" fill="#700070"/><rect x="3" y="12" width="3" height="3" fill="#800000"/><rect x="0" y="6" width="3" height="3" fill="#e8e840"/></svg><svg style="left:173px;top:49px" width="16" height="16" viewBox="0 0 16 16"><path d="M8 0.5 L10.5 2.5 Q16 3 16 8 Q16 13 10 13.5 L8 15.5 L6 13.5 Q0 13 0 8 Q0 3 6 2.5 Z" fill="#a8a79c" stroke="none" stroke-width="1"/><path d="M2.5 10 L4 6 L5.5 10 M3 8.5 H5 M7 10 V6 H9 Q9.8 6 9.8 7 Q9.8 8 9 8 H7 M8.5 8 L10 10 M10.5 6 H14 M12.3 6 V10" fill="none" stroke="#fff" stroke-width="1"/></svg><svg style="left:196px;top:49px" width="16" height="16" viewBox="0 0 16 16"><rect x="0" y="1" width="16" height="2.5" fill="#0000d0"/><rect x="0" y="4.5" width="16" height="2.5" fill="#0000d0"/><rect x="0" y="8.2" width="16" height="2.5" fill="#0000d0"/><rect x="0" y="12" width="16" height="2.5" fill="#0000d0"/><rect x="0" y="3.5" width="16" height="1" fill="#f0f0f0"/><rect x="0" y="7" width="16" height="1.2" fill="#f0f0f0"/><rect x="0" y="10.7" width="16" height="1.3" fill="#f0f0f0"/><path d="M2 14.5 L3 11 L5 12 L9 6 L16 5" fill="none" stroke="#000" stroke-width="2.2"/><path d="M2 14.5 L3 11 L5 12 L9 6 L16 5" fill="none" stroke="#e8e840" stroke-width="1.2"/></svg><svg style="left:219px;top:49px" width="16" height="16" viewBox="0 0 16 16"><path d="M8 1 Q2 1 1 6 L1 11 L6 14 L10 14 L11 8 L15 6 Q14 2 8 1Z" fill="#806000" stroke="#000" stroke-width="0.8"/><path d="M8 1.5 Q2 1.5 1.5 6 Q2 10 7 10.5 L8.5 7 L14.5 5 Q13 2 8 1.5Z" fill="#ffff00" stroke="none" stroke-width="1"/><path d="M7 8 L14 5 L16 7 V13 L11 15 L7 12Z" fill="#a00030" stroke="#000" stroke-width="0.8"/><path d="M11 9 L16 7 V13 L11 15Z" fill="#e00020" stroke="none" stroke-width="1"/><path d="M1.5 8 L7 11 V14 L2 12Z" fill="#a09000" stroke="none" stroke-width="1"/></svg><svg style="left:242px;top:49px" width="16" height="16" viewBox="0 0 16 16"><path d="M8 0.8 A7.2 7.2 0 1 0 8 15.2 A7.2 7.2 0 1 0 8 0.8Z" fill="#e8f0f8" stroke="#000" stroke-width="1.3"/><path d="M3 4 Q6 1 11 2 L10 4 Q6 3.5 4.5 6Z" fill="#10b030" stroke="none" stroke-width="1"/><path d="M2 9 Q2.5 13 7 14 L7 11.5 Q4.5 11 4 9Z" fill="#10b030" stroke="none" stroke-width="1"/><path d="M2 7 L12 4" fill="none" stroke="#3080e0" stroke-width="1"/><rect x="7" y="7" width="9" height="7" fill="#000"/><rect x="8" y="8" width="7" height="5" fill="#fff"/><rect x="10" y="9" width="3" height="3" fill="#e00000"/></svg><svg style="left:265px;top:49px" width="16" height="16" viewBox="0 0 16 16"><path d="M0 8 Q1 3 6 2.5 Q10 2 12 5 L16 2 V14 L12 11 Q10 14 6 13.5 Q1 13 0 8Z" fill="#a8a79c" stroke="none" stroke-width="1"/><rect x="4" y="4" width="2" height="2" fill="#ecebe4"/><rect x="4" y="10" width="2" height="2" fill="#ecebe4"/><rect x="6" y="7" width="3" height="1.5" fill="#ecebe4"/></svg><svg style="left:288px;top:49px" width="16" height="16" viewBox="0 0 16 16"><path d="M0.5 15.5 V4 L3.5 1.5 H13 V8" fill="#fff" stroke="#0000c0" stroke-width="1.3"/><path d="M3.5 1.5 V4.3 H0.5" fill="none" stroke="#0000c0" stroke-width="1"/><path d="M9.5 3 L16 14.5 H3 Z" fill="#ffff00" stroke="#000" stroke-width="1.2"/><rect x="9" y="6" width="1.6" height="5" fill="#c05000"/><rect x="9" y="12" width="1.6" height="1.2" fill="#c05000"/></svg><div class="a" style="left:310px;top:49px;width:1px;height:17px;background:#aca899"></div><div class="a" style="left:311px;top:49px;width:1px;height:17px;background:#fff"></div><svg style="left:317px;top:49px" width="16" height="16" viewBox="0 0 16 16"><path d="M3.5 3 L8 1 L9.5 4 L5 5Z" fill="#00a060" stroke="none" stroke-width="1"/><path d="M0.5 3 L1.5 5 L4 5" fill="none" stroke="#000" stroke-width="1"/><path d="M5 10 Q4 6 8 4 Q12 3 14 5 Q14.5 7 11 10 Q8 12 5 10Z" fill="#60e8ff" stroke="#000" stroke-width="1"/><path d="M6 9.5 L1 15.5" fill="none" stroke="#600080" stroke-width="2"/><path d="M10 15.3 L12.5 12.3 L16 15.3Z" fill="#e00000" stroke="none" stroke-width="1"/></svg><div class="a" style="left:339px;top:49px;width:1px;height:17px;background:#aca899"></div><div class="a" style="left:340px;top:49px;width:1px;height:17px;background:#fff"></div><svg style="left:346px;top:49px" width="16" height="16" viewBox="0 0 16 16"><path d="M0.5 6 L8.5 1 L15.5 7.5 L7.5 13 Z" fill="#fff" stroke="#000" stroke-width="1.2"/><path d="M0.5 6 V9 L7.5 15.5 L15.5 10 V7.5" fill="#fff" stroke="#000" stroke-width="1.2"/><path d="M1 7 V9 L7.5 14.5 V12.5Z" fill="#208080" stroke="none" stroke-width="1"/><path d="M5 5 L7.5 8 L11 3" fill="none" stroke="#000" stroke-width="1.4"/><rect x="6" y="6" width="2" height="1" fill="#e0e000"/></svg><div class="a" style="left:368px;top:49px;width:1px;height:17px;background:#aca899"></div><div class="a" style="left:369px;top:49px;width:1px;height:17px;background:#fff"></div><svg style="left:375px;top:49px" width="16" height="16" viewBox="0 0 16 16"><path d="M8 0.5 A7.5 7.3 0 1 0 8 15.1 A7.5 7.3 0 1 0 8 0.5Z" fill="#a8a79c" stroke="none" stroke-width="1"/><path d="M4 3.5 L8 7.5 L12 3.5 M4 12 L8 8 L12 12" fill="none" stroke="#d8d6cc" stroke-width="1.8"/><rect x="6.5" y="6.5" width="3" height="2.5" fill="#a8a79c"/></svg><div class="a" style="left:422px;top:20px;width:1px;height:25px;background:#aca899"></div><div class="a" style="left:423px;top:20px;width:1px;height:25px;background:#fff"></div><div class="a" style="left:427px;top:47px;width:1px;height:25px;background:#aca899"></div><div class="a" style="left:428px;top:47px;width:1px;height:25px;background:#fff"></div><svg style="left:0;top:0" width="20" height="200" viewBox="0 0 20 200"><path d="M2 90 V79.5 Q2 76 5.5 76 H10 Q13.5 76 13.5 79.5 V90 Z" fill="#a09f94"/><path d="M4.8 81 Q5 78.5 7.8 78.5 Q10.8 78.5 10.8 81 Z" fill="#f4f3ee"/><path d="M7.5 84 L9 86.2 H6 Z" fill="#f4f3ee"/><rect x="5" y="86" width="6" height="1" fill="#f4f3ee"/><rect x="2" y="87.5" width="11.5" height="0.6" fill="#c0bfb4"/><path d="M9 97 L13 101" stroke="#a09f94" stroke-width="1.8"/><rect x="2" y="102" width="11.5" height="9" fill="#a09f94"/><path d="M7.5 105 L9 107.4 H6 Z" fill="#f4f3ee"/><rect x="5" y="107.2" width="6" height="1" fill="#f4f3ee"/></svg><svg style="left:5px;top:117px" width="11" height="14" viewBox="0 0 11 14"><path d="M1.5 2.5 Q1.5 0.5 3.5 0.5 Q5.5 0.5 5.5 2.5 Q5.5 4 4.3 9 H2.7 Q1.5 4 1.5 2.5Z" fill="#8c0000" stroke="none" stroke-width="1"/><path d="M3.5 10 a1.9 1.9 0 1 0 0.01 0Z" fill="#8c0000" stroke="none" stroke-width="1"/></svg><svg style="left:9px;top:143px" width="8" height="9" viewBox="0 0 8 9"><rect x="0" y="0" width="2.5" height="9" fill="#000"/><rect x="4.5" y="0" width="2.5" height="9" fill="#000"/></svg><svg style="left:0px;top:157px" width="17" height="18" viewBox="0 0 17 18"><rect x="2" y="3" width="5" height="10" fill="#0000c8"/><rect x="3" y="4" width="3" height="8" fill="#30e8ff"/><rect x="4" y="4" width="1" height="3" fill="#0000a0"/><rect x="4" y="13" width="1.5" height="1" fill="#0000c8"/><rect x="1" y="14" width="15" height="2" fill="#600090"/><rect x="3" y="16" width="4" height="1" fill="#300060"/><rect x="9" y="16" width="4" height="1" fill="#600030"/><path d="M10 14 V11 Q10 9 12.5 7.5 L13.5 6.5" fill="none" stroke="#f00000" stroke-width="3"/><path d="M10.5 3.5 H16 V9 Z" fill="#f00000" stroke="none" stroke-width="1"/></svg><svg style="left:2px;top:180px" width="12" height="15" viewBox="0 0 12 15"><path d="M1.5 5 Q1.5 0.5 5.5 0.5 Q9.5 0.5 9.5 4.5 Q9.5 7 6.8 8 V10 H4.2 V7.2 Q6.5 6 6.5 4.5 Q6.5 3 5.5 3 Q4.5 3 4.3 5 Z" fill="#ffff60" stroke="#000" stroke-width="1"/><path d="M3.8 11 H7.2 V13.5 H3.8 Z" fill="#ffff60" stroke="#000" stroke-width="1"/></svg></div></body></html>
